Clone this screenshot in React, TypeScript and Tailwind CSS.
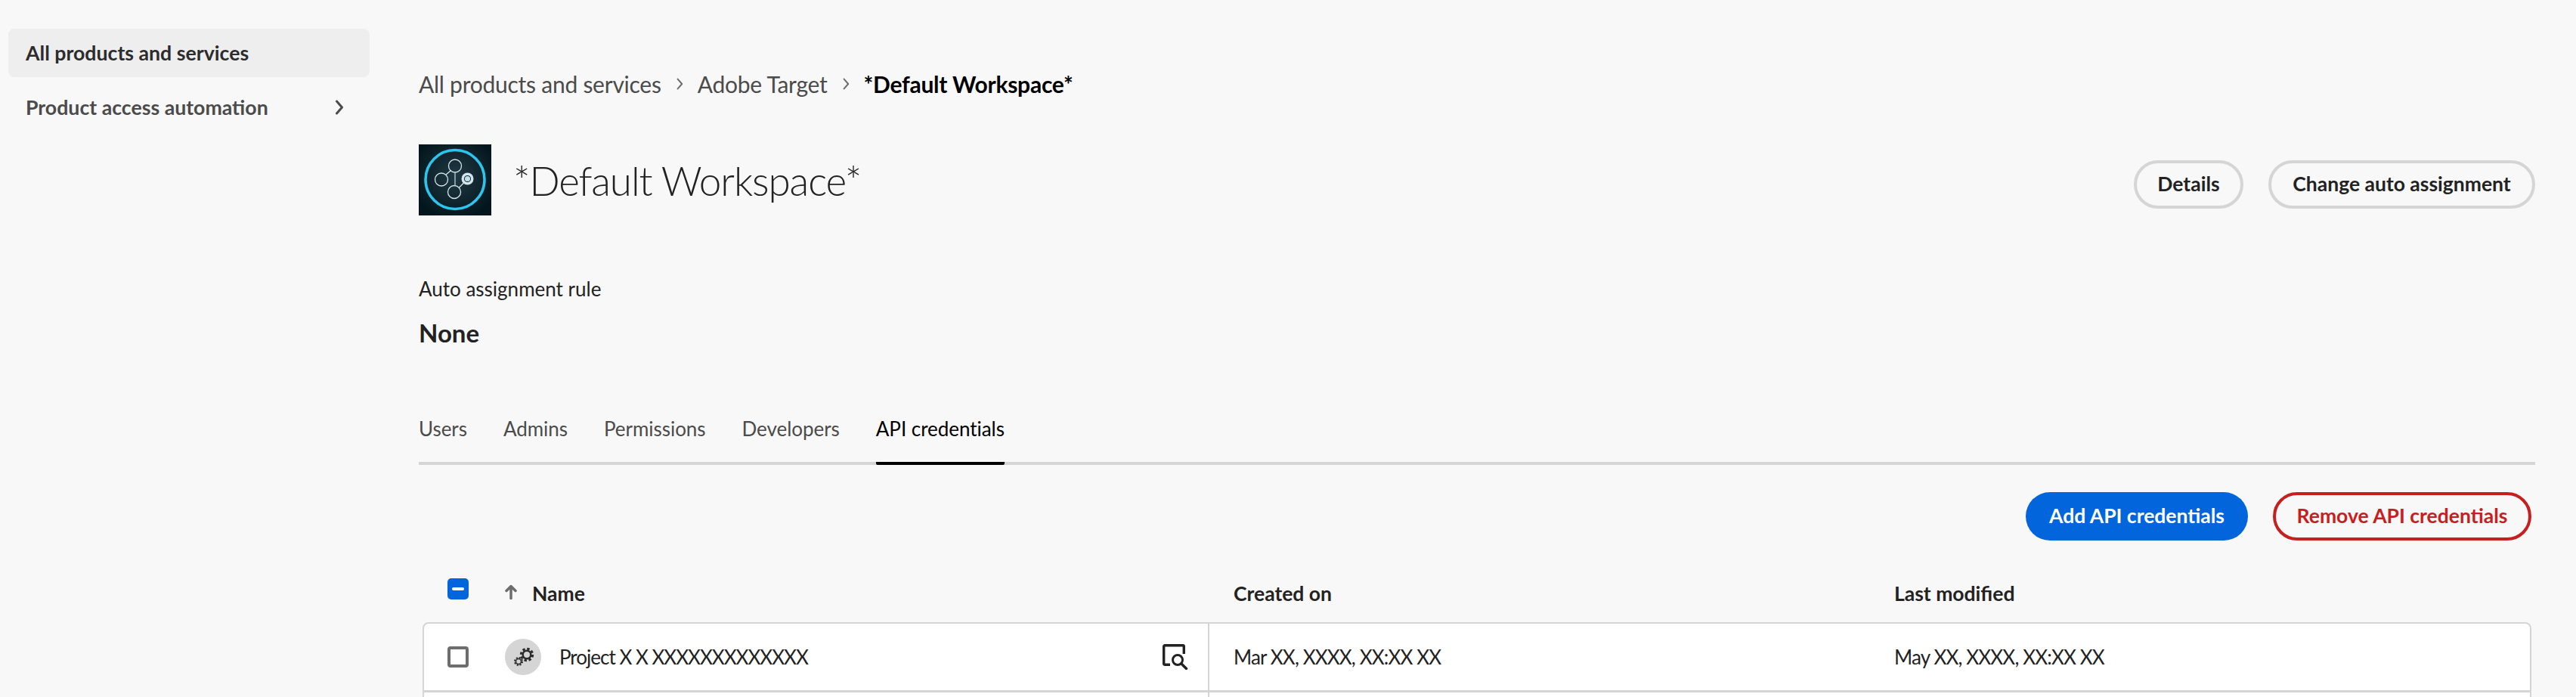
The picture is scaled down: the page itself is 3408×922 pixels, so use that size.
import React from 'react';

const tabs = ['Users', 'Admins', 'Permissions', 'Developers', 'API credentials'];

const ChevronRight: React.FC<{ className: string; weight?: string }> = ({ className, weight = '2.5' }) => (
  <svg viewBox="0 0 12 20" fill="none" stroke="currentColor" strokeWidth={weight} strokeLinecap="round" strokeLinejoin="round" className={className}>
    <path d="M3 2l7 8-7 8" />
  </svg>
);

const WorkspaceLogo = () => (
  <svg viewBox="0 0 96 94" className="w-[96px] h-[94px] shrink-0">
    <defs>
      <radialGradient id="logoBg" cx="50%" cy="45%" r="60%">
        <stop offset="0%" stopColor="#213a45" />
        <stop offset="100%" stopColor="#04161d" />
      </radialGradient>
    </defs>
    <rect width="96" height="94" fill="url(#logoBg)" />
    <circle cx="48" cy="46.5" r="39" fill="none" stroke="#2cc5ee" strokeWidth="3.6" />
    <g fill="none" stroke="#d4e6ec" strokeWidth="1.3">
      <circle cx="48" cy="28.5" r="8.5" />
      <circle cx="30" cy="46.5" r="8.5" />
      <circle cx="47" cy="63" r="8.5" />
      <path d="M36 40l6.500-5.500M53.500 57l6-6" />
    </g>
    <path d="M48 37v17.500" stroke="#9fb4bb" strokeWidth="1.6" />
    <circle cx="64.500" cy="45.500" r="6.300" fill="#0c2630" stroke="#d4e6ec" strokeWidth="3.400" />
    <circle cx="64.500" cy="45.500" r="3.600" fill="#c2dfea" />
  </svg>
);

const GearsIcon = () => (
  <svg viewBox="0 0 48 48" className="w-[48px] h-[48px]">
    <circle cx="24" cy="24" r="24" fill="#d5d5d5" />
    <g fill="none" stroke="#2c2c2c">
      <circle cx="29" cy="21" r="7.700" strokeWidth="3" strokeDasharray="3.400 2.650" />
      <circle cx="29" cy="21" r="5.300" strokeWidth="2.600" />
      <circle cx="18" cy="30" r="5" strokeWidth="2" strokeDasharray="2.200 1.730" />
      <circle cx="18" cy="30" r="3.500" strokeWidth="1.600" />
    </g>
  </svg>
);

const PreviewIcon = () => (
  <svg viewBox="0 0 34 34" fill="none" stroke="#222222" className="w-[34px] h-[34px]">
    <path d="M10 27.300H3a1.300 1.300 0 0 1-1.300-1.300V3A1.300 1.300 0 0 1 3 1.700h24A1.300 1.300 0 0 1 28.300 3v10" strokeWidth="3.400" />
    <circle cx="20" cy="21" r="6.500" strokeWidth="3" />
    <path d="M25 26l6.500 6.500" strokeWidth="3.400" strokeLinecap="round" />
  </svg>
);

const App: React.FC = () => {
  return (
    <div className="h-[922px] w-full overflow-hidden bg-[#f8f8f8] flex font-['Lato','Noto_Sans',sans-serif] text-[#222222]">
      <aside className="w-[554px] shrink-0 pt-[38px] pl-[11px]">
        <div className="w-[478px] h-[64px] rounded-[8px] bg-[#eeeeee] flex items-center pl-[23px] pt-[1px] text-[26.700px] font-bold text-[#2c2c2c]">
          All products and services
        </div>
        <div className="w-[478px] h-[64px] mt-[8px] flex items-center justify-between pl-[23px] pr-[34px] text-[26.700px] font-bold text-[#4b4b4b]">
          <span>Product access automation</span>
          <ChevronRight className="w-[13px] h-[20px] text-[#4b4b4b]" weight="3" />
        </div>
      </aside>

      <main className="w-[2800px] shrink-0 pt-[90px]">
        <div className="h-[42px] flex items-center text-[30px] text-[#4b4b4b] tracking-[-0.25px]">
          <span>All products and services</span>
          <ChevronRight className="w-[10px] h-[16px] mx-[19px] text-[#6d6d6d]" />
          <span>Adobe Target</span>
          <ChevronRight className="w-[10px] h-[16px] mx-[19px] text-[#6d6d6d]" />
          <span className="font-bold text-black">*Default Workspace*</span>
        </div>

        <div className="mt-[59px] flex items-center justify-between">
          <div className="flex items-center gap-[29px]">
            <WorkspaceLogo />
            <h1 className="text-[53px] font-light leading-none tracking-[-1.1px] text-[#222222]">*Default Workspace*</h1>
          </div>
          <div className="flex items-center gap-[33px] mt-[12px]">
            <button className="h-[64px] w-[145px] rounded-full border-4 border-[#d5d5d5] text-[26.500px] font-bold text-[#222222]">Details</button>
            <button className="h-[64px] w-[353px] rounded-full border-4 border-[#d5d5d5] text-[26.500px] font-bold text-[#222222]">Change auto assignment</button>
          </div>
        </div>

        <div className="mt-[80px] text-[26px] leading-[34px] text-[#222222]">Auto assignment rule</div>
        <div className="mt-[21px] text-[33px] leading-[40px] font-bold text-[#222222]">None</div>

        <div className="mt-[64px] border-b-4 border-[#d5d5d5] h-[91px] flex gap-[48px]">
          {tabs.map((tab, index) => (
            <div
              key={index}
              className={
                index === 4
                  ? 'h-[91px] pt-[26px] border-b-4 border-black rounded-b-[2px] text-[26px] leading-[34px] tracking-[-0.04px] text-[#000000]'
                  : 'h-[91px] pt-[26px] text-[26px] leading-[34px] tracking-[-0.04px] text-[#4b4b4b]'
              }
            >
              {tab}
            </div>
          ))}
        </div>

        <div className="mt-[36px] pr-[5px] flex justify-end gap-[33px]">
          <button className="h-[64px] w-[294px] rounded-full bg-[#0265dc] text-[26.500px] font-bold text-white">Add API credentials</button>
          <button className="h-[64px] w-[342px] rounded-full border-4 border-[#c5201f] text-[26.500px] font-bold text-[#c5201f]">Remove API credentials</button>
        </div>

        <div className="mx-[5px]">
          <div className="mt-[50px] h-[58px] grid grid-cols-[1041px_874px_1fr] text-[26.500px] font-bold text-[#222222]">
            <div className="flex pl-[33px]">
              <div className="w-[28px] h-[28px] rounded-[5px] bg-[#0265dc] flex items-center justify-center">
                <div className="w-[16px] h-[4px] rounded-full bg-white" />
              </div>
              <svg viewBox="0 0 16 20" fill="none" stroke="#6d6d6d" strokeWidth="3.500" strokeLinecap="round" strokeLinejoin="round" className="w-[16px] h-[20px] ml-[48px] mt-[8px]">
                <path d="M8 18.500V2.500M2 8.500l6-6 6 6" />
              </svg>
              <span className="ml-[20px] leading-[34px] mt-[3px]">Name</span>
            </div>
            <div className="pl-[32px] leading-[34px] pt-[3px]">Created on</div>
            <div className="pl-[32px] leading-[34px] pt-[3px]">Last modified</div>
          </div>

          <div className="border-2 border-[#d5d5d5] rounded-t-[8px] bg-white">
            <div className="h-[91px] border-b-[3px] border-[#d5d5d5] grid grid-cols-[1039px_874px_1fr] text-[26px] tracking-[-0.85px] text-[#222222]">
              <div className="flex items-center pl-[31px] pr-[26px] border-r-2 border-[#d5d5d5]">
                <div className="w-[28px] h-[28px] rounded-[4px] border-4 border-[#6d6d6d] bg-white" />
                <div className="ml-[48px]"><GearsIcon /></div>
                <span className="ml-[24px] flex-1 tracking-[-1px]">Project X X XXXXXXXXXXXXX</span>
                <PreviewIcon />
              </div>
              <div className="flex items-center pl-[32px]">Mar XX, XXXX, XX:XX XX</div>
              <div className="flex items-center pl-[32px]">May XX, XXXX, XX:XX XX</div>
            </div>
            <div className="h-[91px] grid grid-cols-[1039px_874px_1fr]">
              <div className="border-r-2 border-[#d5d5d5]" />
            </div>
          </div>
        </div>
      </main>
    </div>
  );
};

export default App;
